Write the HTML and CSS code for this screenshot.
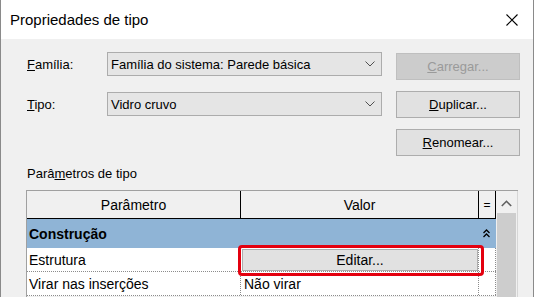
FILE: index.html
```html
<!DOCTYPE html>
<html lang="pt">

<head>
    <meta charset="UTF-8">
    <title>Propriedades de tipo</title>
    <link rel="stylesheet" href="styles.css">
</head>

<body>
    <div class="window">
        <div class="titlebar">
            <span class="title">Propriedades de tipo</span>
            <svg class="close" width="12" height="12" viewBox="0 0 12 12">
                <path d="M0.5 0.5 L11.5 11.5 M11.5 0.5 L0.5 11.5" stroke="#000" stroke-width="1.1" fill="none" />
            </svg>
        </div>

        <div class="content">
            <div class="top">
                <div class="fields">
                    <div class="field field-familia">
                        <label><u>F</u>amília:</label>
                        <div class="select">
                            <span>Família do sistema: Parede básica</span>
                            <svg width="10" height="6" viewBox="0 0 10 6">
                                <path d="M0.5 0.5 L5 5 L9.5 0.5" stroke="#505050" fill="none" />
                            </svg>
                        </div>
                    </div>
                    <div class="field field-tipo">
                        <label><u>T</u>ipo:</label>
                        <div class="select">
                            <span>Vidro cruvo</span>
                            <svg width="10" height="6" viewBox="0 0 10 6">
                                <path d="M0.5 0.5 L5 5 L9.5 0.5" stroke="#505050" fill="none" />
                            </svg>
                        </div>
                    </div>
                </div>
                <div class="buttons">
                    <div class="btn disabled"><u>C</u>arregar...</div>
                    <div class="btn"><u>D</u>uplicar...</div>
                    <div class="btn"><u>R</u>enomear...</div>
                </div>
            </div>

            <div class="grid-label">Parâ<u>m</u>etros de tipo</div>

            <div class="grid-wrap">
                <div class="grid">
                    <div class="row head">
                        <div class="c1">Parâmetro</div>
                        <div class="c2">Valor</div>
                        <div class="c3">=</div>
                    </div>
                    <div class="row group">
                        <div class="group-name">Construção</div>
                        <div class="c3 collapse">
                            <svg width="7" height="9" viewBox="0 0 7 9">
                                <path d="M0.5 4 L3.5 1 L6.5 4 M0.5 8 L3.5 5 L6.5 8" stroke="#000" stroke-width="1.3" fill="none" />
                            </svg>
                        </div>
                    </div>
                    <div class="row item">
                        <div class="c1">Estrutura</div>
                        <div class="c2 edit-cell">
                            <div class="edit-btn">Editar...</div>
                        </div>
                        <div class="c3"></div>
                    </div>
                    <div class="row item">
                        <div class="c1">Virar nas inserções</div>
                        <div class="c2">Não virar</div>
                        <div class="c3"></div>
                    </div>
                    <div class="highlight"></div>
                </div>
                <div class="scrollbar">
                    <svg width="11" height="7" viewBox="0 0 11 7">
                        <path d="M0.8 6 L5.5 1.3 L10.2 6" stroke="#606060" stroke-width="1.6" fill="none" />
                    </svg>
                    <div class="thumb"></div>
                </div>
            </div>
        </div>
    </div>
</body>

</html>
```

FILE: styles.css
```css
* {
    padding: 0;
    margin: 0;
    box-sizing: border-box;
}

body {
    font-family: "Segoe UI", "Liberation Sans", sans-serif;
    font-size: 13px;
    color: #000;
    background: #f0f0f0;
}

.window {
    width: 534px;
    height: 297px;
    border-left: 1px solid #8a8a8a;
    border-right: 1px solid #8a8a8a;
    overflow: hidden;
    background: #f0f0f0;
}

.titlebar {
    height: 39px;
    background: #fff;
    display: flex;
    align-items: center;
    justify-content: space-between;
    padding: 0 15px 0 9px;
}

.title {
    font-size: 15px;
    padding-bottom: 1px;
}

.close {
    margin-top: 1px;
}

.content {
    padding-left: 25px;
}

.top {
    display: flex;
}

.fields {
    width: 356px;
}

.field {
    display: flex;
    align-items: center;
    height: 24px;
}

.field-familia {
    margin-top: 13px;
}

.field-tipo {
    margin-top: 16px;
}

.field label {
    width: 81px;
    padding-left: 1px;
}

.select {
    width: 275px;
    height: 24px;
    background: #e5e5e5;
    border: 1px solid #acacac;
    display: flex;
    align-items: center;
    justify-content: space-between;
    padding: 0 6px 0 3px;
}

.buttons {
    margin-left: 14px;
    margin-top: 14px;
    display: flex;
    flex-direction: column;
    gap: 11px;
}

.btn {
    width: 124px;
    height: 27px;
    background: #e1e1e1;
    border: 1px solid #adadad;
    display: flex;
    align-items: center;
    justify-content: center;
}

.btn.disabled {
    background: #cccccc;
    border-color: #bfbfbf;
    color: #9a9a9a;
}

.grid-label {
    margin-top: 10px;
    height: 24px;
    padding-left: 1px;
    line-height: 16px;
}

.grid-wrap {
    display: flex;
    height: 120px;
    width: 492px;
    border-top: 1px solid #a0a0a0;
    border-left: 1px solid #a0a0a0;
}

.grid {
    width: 469px;
    position: relative;
}

.row {
    display: flex;
}

.row .c1 {
    width: 214px;
    padding-left: 2px;
}

.row .c2 {
    width: 238px;
    padding-left: 3px;
}

.row .c3 {
    width: 16px;
}

.head {
    height: 28px;
    background: #f0f0f0;
    border-bottom: 1px solid #000;
    font-size: 14px;
}

.head > div {
    display: flex;
    align-items: center;
    justify-content: center;
    border-right: 1px solid #000;
}

.head .c1,
.head .c2 {
    padding-left: 0;
}

.head .c3 {
    width: 17px;
    font-size: 12px;
    border-right: 1px solid #000;
}

.group {
    height: 29px;
    background: #8fb4d6;
    align-items: center;
}

.group-name {
    width: 452px;
    padding-left: 2px;
    font-weight: bold;
    font-size: 14px;
}

.collapse {
    display: flex;
    justify-content: center;
    padding-right: 2px;
}

.item {
    height: 24px;
    background: #fff;
    font-size: 14px;
    align-items: stretch;
    border-bottom: 1px dotted #8c8c8c;
}

.item > div {
    display: flex;
    align-items: center;
    border-right: 1px dotted #8c8c8c;
}

.item .c3 {
    width: 17px;
}

.edit-cell {
    padding: 1px 0 0 1px !important;
}

.edit-btn {
    width: 100%;
    height: 22px;
    background: #e1e1e1;
    border: 1px solid #adadad;
    display: flex;
    align-items: center;
    justify-content: center;
}

.highlight {
    position: absolute;
    left: 211px;
    top: 54px;
    width: 246px;
    height: 31px;
    border: 3px solid #e3000f;
    border-radius: 4px;
}

.scrollbar {
    width: 22px;
    background: #f0f0f0;
    border-right: 1px solid #d6d6d6;
    display: flex;
    flex-direction: column;
    align-items: center;
    padding-top: 9px;
}

.thumb {
    margin-top: 6px;
    width: 19px;
    flex: 1;
    background: #cdcdcd;
}
```
